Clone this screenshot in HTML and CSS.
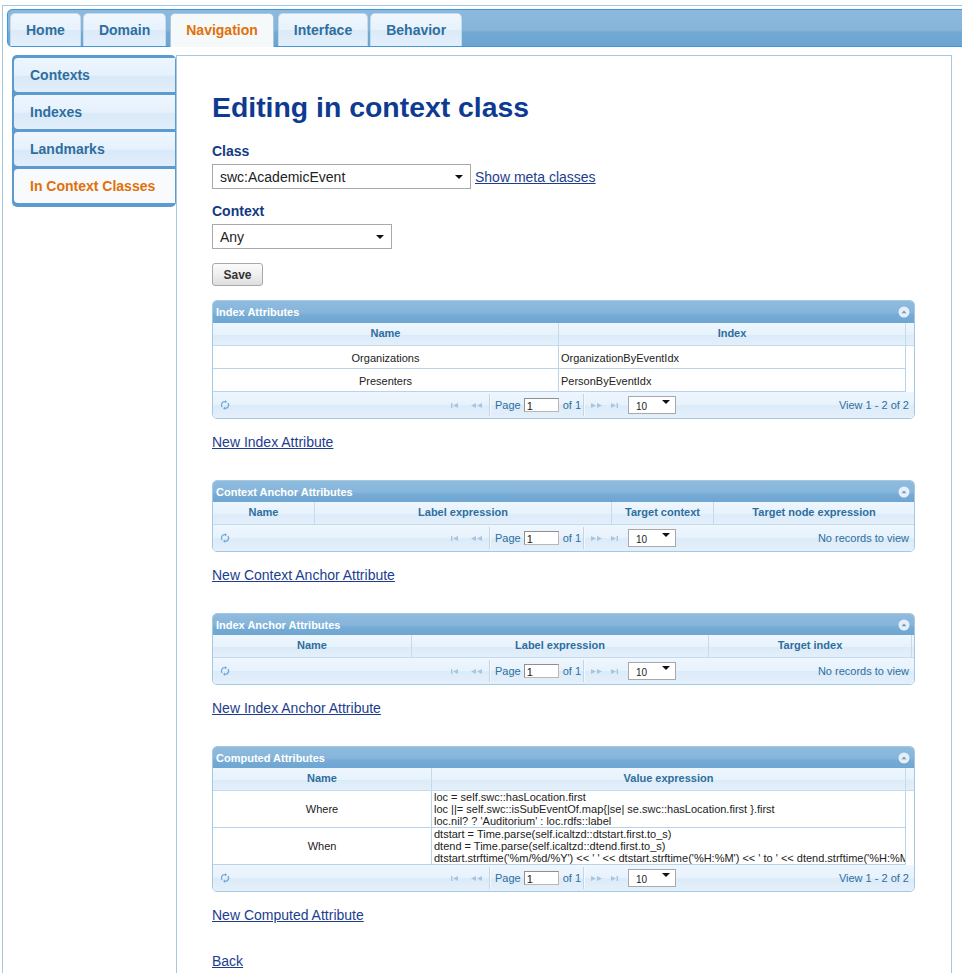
FILE: index.html
```html
<!DOCTYPE html>
<html>
<head>
<meta charset="utf-8">
<title>Editing in context class</title>
<link rel="stylesheet" href="styles.css">
</head>
<body>
<div class="frame">
  <ul class="tabbar">
    <li class="tab">Home</li>
    <li class="tab">Domain</li>
    <li class="tab active">Navigation</li>
    <li class="tab">Interface</li>
    <li class="tab">Behavior</li>
  </ul>
  <div class="main">
    <ul class="sidenav">
      <li class="side-item">Contexts</li>
      <li class="side-item">Indexes</li>
      <li class="side-item">Landmarks</li>
      <li class="side-item active">In Context Classes</li>
    </ul>
    <div class="panel">
      <h1 class="title">Editing in context class</h1>

      <div class="label">Class</div>
      <div class="field-row">
        <div class="select sel-class"><span>swc:AcademicEvent</span><i class="arrow"></i></div>
        <a class="link" href="#">Show meta classes</a>
      </div>

      <div class="label">Context</div>
      <div class="field-row">
        <div class="select sel-context"><span>Any</span><i class="arrow"></i></div>
      </div>

      <button class="btn">Save</button>

      <!-- Grid 1 -->
      <div class="gt">
        <div class="gt-cap first-cap"><span>Index Attributes</span><svg class="collapse" width="12" height="12" viewBox="0 0 12 12"><circle cx="6" cy="6" r="5.5" fill="#e6eff8"/><polygon points="3.5,7.3 8.5,7.3 6,4.5" fill="#6b9dc8"/></svg></div>
        <div class="gt-head cols-1">
          <div>Name</div><div>Index</div><div class="fill"></div>
        </div>
        <div class="gt-row cols-1">
          <div class="c">Organizations</div><div>OrganizationByEventIdx</div>
        </div>
        <div class="gt-row cols-1">
          <div class="c">Presenters</div><div>PersonByEventIdx</div>
        </div>
        <div class="pager">
          <div class="pg-left"><svg class="refresh" width="10" height="12" viewBox="0 0 10 12"><path d="M2.1 8 A3.3 3.3 0 0 1 5 2.7" fill="none" stroke="#74a9d6" stroke-width="1.3"/><polygon points="5,1 7,2.7 5,4.4" fill="#74a9d6"/><path d="M7.9 4 A3.3 3.3 0 0 1 5 9.3" fill="none" stroke="#74a9d6" stroke-width="1.3"/><polygon points="5,7.6 3,9.3 5,11" fill="#74a9d6"/></svg></div>
          <div class="pg-center">
            <svg class="pg-first" width="7" height="7" viewBox="0 0 7 7"><rect x="0" y="1" width="1.4" height="5" fill="#a9c6e0"/><polygon points="7,1 2,3.5 7,6" fill="#a9c6e0"/></svg>
            <svg class="pg-prev" width="11" height="7" viewBox="0 0 11 7"><polygon points="5,1 0,3.5 5,6" fill="#a9c6e0"/><polygon points="11,1 6,3.5 11,6" fill="#a9c6e0"/></svg>
            <span class="pg-sep"></span>
            <span class="pg-page">Page</span>
            <span class="pg-input">1</span>
            <span class="pg-of">of 1</span>
            <span class="pg-sep"></span>
            <svg class="pg-next" width="11" height="7" viewBox="0 0 11 7"><polygon points="0,1 5,3.5 0,6" fill="#a9c6e0"/><polygon points="6,1 11,3.5 6,6" fill="#a9c6e0"/></svg>
            <svg class="pg-last" width="7" height="7" viewBox="0 0 7 7"><polygon points="0,1 5,3.5 0,6" fill="#a9c6e0"/><rect x="5.6" y="1" width="1.4" height="5" fill="#a9c6e0"/></svg>
            <span class="pg-select"><span>10</span><i class="arrow"></i></span>
          </div>
          <div class="pg-right">View 1 - 2 of 2</div>
        </div>
      </div>
      <p class="gap-link"><a class="link" href="#">New Index Attribute</a></p>

      <!-- Grid 2 -->
      <div class="gt">
        <div class="gt-cap"><span>Context Anchor Attributes</span><svg class="collapse" width="12" height="12" viewBox="0 0 12 12"><circle cx="6" cy="6" r="5.5" fill="#e6eff8"/><polygon points="3.5,7.3 8.5,7.3 6,4.5" fill="#6b9dc8"/></svg></div>
        <div class="gt-head cols-2">
          <div>Name</div><div>Label expression</div><div>Target context</div><div class="last">Target node expression</div>
        </div>
        <div class="pager">
          <div class="pg-left"><svg class="refresh" width="10" height="12" viewBox="0 0 10 12"><path d="M2.1 8 A3.3 3.3 0 0 1 5 2.7" fill="none" stroke="#74a9d6" stroke-width="1.3"/><polygon points="5,1 7,2.7 5,4.4" fill="#74a9d6"/><path d="M7.9 4 A3.3 3.3 0 0 1 5 9.3" fill="none" stroke="#74a9d6" stroke-width="1.3"/><polygon points="5,7.6 3,9.3 5,11" fill="#74a9d6"/></svg></div>
          <div class="pg-center">
            <svg class="pg-first" width="7" height="7" viewBox="0 0 7 7"><rect x="0" y="1" width="1.4" height="5" fill="#a9c6e0"/><polygon points="7,1 2,3.5 7,6" fill="#a9c6e0"/></svg>
            <svg class="pg-prev" width="11" height="7" viewBox="0 0 11 7"><polygon points="5,1 0,3.5 5,6" fill="#a9c6e0"/><polygon points="11,1 6,3.5 11,6" fill="#a9c6e0"/></svg>
            <span class="pg-sep"></span>
            <span class="pg-page">Page</span>
            <span class="pg-input">1</span>
            <span class="pg-of">of 1</span>
            <span class="pg-sep"></span>
            <svg class="pg-next" width="11" height="7" viewBox="0 0 11 7"><polygon points="0,1 5,3.5 0,6" fill="#a9c6e0"/><polygon points="6,1 11,3.5 6,6" fill="#a9c6e0"/></svg>
            <svg class="pg-last" width="7" height="7" viewBox="0 0 7 7"><polygon points="0,1 5,3.5 0,6" fill="#a9c6e0"/><rect x="5.6" y="1" width="1.4" height="5" fill="#a9c6e0"/></svg>
            <span class="pg-select"><span>10</span><i class="arrow"></i></span>
          </div>
          <div class="pg-right">No records to view</div>
        </div>
      </div>
      <p class="gap-link"><a class="link" href="#">New Context Anchor Attribute</a></p>

      <!-- Grid 3 -->
      <div class="gt">
        <div class="gt-cap"><span>Index Anchor Attributes</span><svg class="collapse" width="12" height="12" viewBox="0 0 12 12"><circle cx="6" cy="6" r="5.5" fill="#e6eff8"/><polygon points="3.5,7.3 8.5,7.3 6,4.5" fill="#6b9dc8"/></svg></div>
        <div class="gt-head cols-3">
          <div>Name</div><div>Label expression</div><div>Target index</div><div class="fill"></div>
        </div>
        <div class="pager">
          <div class="pg-left"><svg class="refresh" width="10" height="12" viewBox="0 0 10 12"><path d="M2.1 8 A3.3 3.3 0 0 1 5 2.7" fill="none" stroke="#74a9d6" stroke-width="1.3"/><polygon points="5,1 7,2.7 5,4.4" fill="#74a9d6"/><path d="M7.9 4 A3.3 3.3 0 0 1 5 9.3" fill="none" stroke="#74a9d6" stroke-width="1.3"/><polygon points="5,7.6 3,9.3 5,11" fill="#74a9d6"/></svg></div>
          <div class="pg-center">
            <svg class="pg-first" width="7" height="7" viewBox="0 0 7 7"><rect x="0" y="1" width="1.4" height="5" fill="#a9c6e0"/><polygon points="7,1 2,3.5 7,6" fill="#a9c6e0"/></svg>
            <svg class="pg-prev" width="11" height="7" viewBox="0 0 11 7"><polygon points="5,1 0,3.5 5,6" fill="#a9c6e0"/><polygon points="11,1 6,3.5 11,6" fill="#a9c6e0"/></svg>
            <span class="pg-sep"></span>
            <span class="pg-page">Page</span>
            <span class="pg-input">1</span>
            <span class="pg-of">of 1</span>
            <span class="pg-sep"></span>
            <svg class="pg-next" width="11" height="7" viewBox="0 0 11 7"><polygon points="0,1 5,3.5 0,6" fill="#a9c6e0"/><polygon points="6,1 11,3.5 6,6" fill="#a9c6e0"/></svg>
            <svg class="pg-last" width="7" height="7" viewBox="0 0 7 7"><polygon points="0,1 5,3.5 0,6" fill="#a9c6e0"/><rect x="5.6" y="1" width="1.4" height="5" fill="#a9c6e0"/></svg>
            <span class="pg-select"><span>10</span><i class="arrow"></i></span>
          </div>
          <div class="pg-right">No records to view</div>
        </div>
      </div>
      <p class="gap-link"><a class="link" href="#">New Index Anchor Attribute</a></p>

      <!-- Grid 4 -->
      <div class="gt">
        <div class="gt-cap"><span>Computed Attributes</span><svg class="collapse" width="12" height="12" viewBox="0 0 12 12"><circle cx="6" cy="6" r="5.5" fill="#e6eff8"/><polygon points="3.5,7.3 8.5,7.3 6,4.5" fill="#6b9dc8"/></svg></div>
        <div class="gt-head cols-4">
          <div>Name</div><div>Value expression</div><div class="fill"></div>
        </div>
        <div class="gt-row tall cols-4">
          <div class="c">Where</div><div class="code">loc = self.swc::hasLocation.first
loc ||= self.swc::isSubEventOf.map{|se| se.swc::hasLocation.first }.first
loc.nil? ? 'Auditorium' : loc.rdfs::label</div>
        </div>
        <div class="gt-row tall cols-4">
          <div class="c">When</div><div class="code">dtstart = Time.parse(self.icaltzd::dtstart.first.to_s)
dtend = Time.parse(self.icaltzd::dtend.first.to_s)
dtstart.strftime('%m/%d/%Y') &lt;&lt; ' ' &lt;&lt; dtstart.strftime('%H:%M') &lt;&lt; ' to ' &lt;&lt; dtend.strftime('%H:%M')</div>
        </div>
        <div class="pager">
          <div class="pg-left"><svg class="refresh" width="10" height="12" viewBox="0 0 10 12"><path d="M2.1 8 A3.3 3.3 0 0 1 5 2.7" fill="none" stroke="#74a9d6" stroke-width="1.3"/><polygon points="5,1 7,2.7 5,4.4" fill="#74a9d6"/><path d="M7.9 4 A3.3 3.3 0 0 1 5 9.3" fill="none" stroke="#74a9d6" stroke-width="1.3"/><polygon points="5,7.6 3,9.3 5,11" fill="#74a9d6"/></svg></div>
          <div class="pg-center">
            <svg class="pg-first" width="7" height="7" viewBox="0 0 7 7"><rect x="0" y="1" width="1.4" height="5" fill="#a9c6e0"/><polygon points="7,1 2,3.5 7,6" fill="#a9c6e0"/></svg>
            <svg class="pg-prev" width="11" height="7" viewBox="0 0 11 7"><polygon points="5,1 0,3.5 5,6" fill="#a9c6e0"/><polygon points="11,1 6,3.5 11,6" fill="#a9c6e0"/></svg>
            <span class="pg-sep"></span>
            <span class="pg-page">Page</span>
            <span class="pg-input">1</span>
            <span class="pg-of">of 1</span>
            <span class="pg-sep"></span>
            <svg class="pg-next" width="11" height="7" viewBox="0 0 11 7"><polygon points="0,1 5,3.5 0,6" fill="#a9c6e0"/><polygon points="6,1 11,3.5 6,6" fill="#a9c6e0"/></svg>
            <svg class="pg-last" width="7" height="7" viewBox="0 0 7 7"><polygon points="0,1 5,3.5 0,6" fill="#a9c6e0"/><rect x="5.6" y="1" width="1.4" height="5" fill="#a9c6e0"/></svg>
            <span class="pg-select"><span>10</span><i class="arrow"></i></span>
          </div>
          <div class="pg-right">View 1 - 2 of 2</div>
        </div>
      </div>
      <p class="gap-link"><a class="link" href="#">New Computed Attribute</a></p>

      <p class="back-link"><a class="link" href="#">Back</a></p>
    </div>
  </div>
</div>
</body>
</html>
```

FILE: styles.css
```css
html, body {
  margin: 0;
  padding: 0;
  overflow: hidden;
  background: #fff;
}
body {
  font-family: "Liberation Sans", Arial, sans-serif;
  color: #222;
}

.frame {
  margin: 5px 0 0 2px;
  border-top: 1px solid #a6c9e2;
  border-left: 1px solid #a6c9e2;
  padding: 3px 0 0 4px;
  width: 1010px;
  height: 1100px;
}

/* top tabs */
.tabbar {
  list-style: none;
  margin: 0;
  padding: 3px 0 0 2px;
  height: 33px;
  display: flex;
  align-items: flex-end;
  border: 1px solid #4297d7;
  border-radius: 5px;
  background: linear-gradient(to bottom, #8cb9dd 0%, #87b5da 55%, #72a9d4 62%, #6ca4d1 100%);
}
.tab {
  height: 32px;
  padding: 0 15px;
  margin-right: 2px;
  border: 1px solid #c5dbec;
  border-bottom: 0;
  border-radius: 5px 5px 0 0;
  display: flex;
  align-items: center;
  font-size: 14px;
  font-weight: bold;
  color: #2e6e9e;
  background: linear-gradient(to bottom, #f0f7fe 0%, #e7f2fc 50%, #dbeaf9 51%, #e3effb 100%);
}
.tab.active {
  margin: 0 4px -1px 2px;
  padding-bottom: 1px;
  height: 32px;
  background: #f6f9fa;
  border-color: #a6c9e2;
  color: #e17009;
}

/* body */
.main {
  display: flex;
  align-items: flex-start;
  margin-top: 8px;
}
.sidenav {
  list-style: none;
  margin: 0 0 0 5px;
  padding: 3px 1px 4px 2px;
  width: 164px;
  box-sizing: border-box;
  display: flex;
  flex-direction: column;
  gap: 3px;
  background: #5b9bd0;
  border-radius: 5px;
}
.side-item {
  height: 34px;
  padding-left: 16px;
  display: flex;
  align-items: center;
  font-size: 14px;
  font-weight: bold;
  color: #2e6e9e;
  border-radius: 4px 0 0 4px;
  background: linear-gradient(to bottom, #eef6fe 0%, #e6f1fc 50%, #d9e9f8 55%, #e2eefa 100%);
}
.side-item.active {
  background: #f8fafb;
  color: #e17009;
}

.panel {
  width: 776px;
  box-sizing: border-box;
  min-height: 1000px;
  border: 1px solid #a6c9e2;
  border-bottom: 0;
  padding: 0 35px;
}

.title {
  margin: 35px 0 20px;
  font-size: 28.4px;
  line-height: 32px;
  font-weight: bold;
  color: #0d3b91;
}

.label {
  font-size: 14px;
  line-height: 16px;
  font-weight: bold;
  color: #133a82;
  margin-bottom: 5px;
}
.field-row {
  display: flex;
  align-items: center;
  gap: 4px;
  margin-bottom: 14px;
}
.select {
  height: 25px;
  box-sizing: border-box;
  border: 1px solid #a9a9a9;
  background: #fff;
  display: flex;
  align-items: center;
  justify-content: space-between;
  padding: 0 7px 0 7px;
  font-size: 14px;
  color: #222;
}
.sel-class { width: 259px; }
.sel-context { width: 180px; }
.arrow {
  display: block;
  width: 0;
  height: 0;
  border-left: 4px solid transparent;
  border-right: 4px solid transparent;
  border-top: 4px solid #111;
}
.link {
  font-size: 14px;
  line-height: 16px;
  color: #1d3d8e;
  text-decoration: underline;
}

.btn {
  display: block;
  width: 51px;
  height: 23px;
  margin: 0 0 14px;
  padding: 0;
  border: 1px solid #a9a9a9;
  border-radius: 3px;
  background: linear-gradient(to bottom, #fbfbfb 0%, #efefef 50%, #dedede 100%);
  font-family: "Liberation Sans", Arial, sans-serif;
  font-size: 12px;
  font-weight: bold;
  color: #333;
}

.gap-link {
  margin: 15px 0 30px;
  line-height: 16px;
  font-size: 14px;
}
.back-link {
  margin: 0;
  line-height: 16px;
  font-size: 14px;
}

/* grid */
.gt {
  width: 703px;
  box-sizing: border-box;
  border: 1px solid #a6c9e2;
  border-radius: 5px;
  overflow: hidden;
  font-size: 11px;
}
.gt-cap {
  height: 21px;
  padding: 0 3px 0 3px;
  display: flex;
  align-items: center;
  justify-content: space-between;
  color: #fff;
  font-weight: bold;
  background: linear-gradient(to bottom, #8ebbde 0%, #87b6db 50%, #75abd5 65%, #6ea6d2 100%);
}
.gt-cap.first-cap { height: 22px; }
.collapse { display: block; margin-right: 1px; }

.gt-head {
  display: grid;
  height: 23px;
  box-sizing: border-box;
  background: linear-gradient(to bottom, #eef6fe 0%, #e7f2fc 50%, #dcebf9 52%, #e4f0fb 100%);
}
.gt-head > div {
  border-right: 1px solid #c5dbec;
  border-bottom: 1px solid #c5dbec;
  display: flex;
  align-items: center;
  justify-content: center;
  padding-bottom: 2px;
  font-weight: bold;
  color: #2e6e9e;
  white-space: nowrap;
  overflow: hidden;
}
.gt-head > div.fill,
.gt-head > div.last { border-right: 0; }

.cols-1 { grid-template-columns: 346px 347px 8px; }
.cols-2 { grid-template-columns: 102px 297px 102px 200px; }
.cols-3 { grid-template-columns: 199px 297px 203px 2px; }
.cols-4 { grid-template-columns: 219px 474px 8px; }

.gt-row {
  display: grid;
  height: 23px;
  background: #fff;
}
.gt-row > div {
  border-right: 1px solid #b9d4ea;
  border-bottom: 1px solid #b9d4ea;
  padding: 2px 2px 0;
  display: flex;
  align-items: center;
  white-space: nowrap;
  overflow: hidden;
  color: #222;
}
.gt-row > div.c { justify-content: center; }
.gt-row.tall { height: 37px; }
.gt-row.tall > div { padding-top: 0; }
.gt-row > div.code {
  display: block;
  white-space: pre;
  line-height: 12px;
}

.pager {
  height: 26px;
  display: grid;
  grid-template-columns: 1fr auto 1fr;
  align-items: center;
  color: #2e6e9e;
  background: linear-gradient(to bottom, #eef6fe 0%, #e7f2fc 50%, #dcebf9 52%, #e4f0fb 100%);
}
.pg-left { padding-left: 7px; display: flex; align-items: center; }
.refresh { display: block; }
.pg-right { text-align: right; padding-right: 5px; white-space: nowrap; }
.pg-center {
  display: flex;
  align-items: center;
  white-space: nowrap;
}
.pg-center svg { display: block; }
.pg-prev { margin-left: 13px; }
.pg-sep {
  display: block;
  width: 1px;
  height: 22px;
  background: #c4d5e4;
  border-right: 1px solid #f4f8fc;
}
.pg-center .pg-sep:nth-of-type(1) { margin-left: 7px; }
.pg-page { margin-left: 4px; }
.pg-input {
  margin-left: 3px;
  width: 35px;
  height: 14px;
  box-sizing: border-box;
  border: 1px solid #b8b8b8;
  border-top-color: #8f8f8f;
  border-left-color: #8f8f8f;
  background: #fff;
  color: #222;
  font-size: 11px;
  line-height: 12px;
  padding-left: 2px;
  padding-top: 1px;
}
.pg-of { margin-left: 4px; margin-right: 2px; }
.pg-next { margin-left: 6px; }
.pg-last { margin-left: 9px; }
.pg-select {
  margin-left: 10px;
  width: 48px;
  height: 18px;
  box-sizing: border-box;
  border: 1px solid #a9a9a9;
  background: #fff;
  display: flex;
  align-items: flex-end;
  justify-content: space-between;
  padding: 0 5px 0 7px;
  font-size: 10px;
  line-height: 12px;
  color: #222;
}
.pg-select .arrow { align-self: center; margin-top: -6px; }
```
